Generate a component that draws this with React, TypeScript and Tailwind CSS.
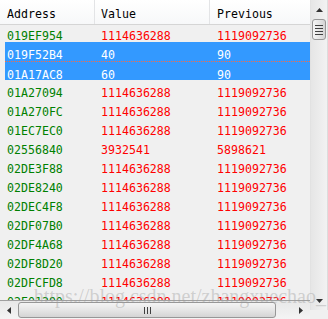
import React from "react";

type Row = { addr: string; value: string; prev: string };

const rows: Row[] = [
  { addr: "019EF954", value: "1114636288", prev: "1119092736" },
  { addr: "019F52B4", value: "40", prev: "90" },
  { addr: "01A17AC8", value: "60", prev: "90" },
  { addr: "01A27094", value: "1114636288", prev: "1119092736" },
  { addr: "01A270FC", value: "1114636288", prev: "1119092736" },
  { addr: "01EC7EC0", value: "1114636288", prev: "1119092736" },
  { addr: "02556840", value: "3932541", prev: "5898621" },
  { addr: "02DE3F88", value: "1114636288", prev: "1119092736" },
  { addr: "02DE8240", value: "1114636288", prev: "1119092736" },
  { addr: "02DEC4F8", value: "1114636288", prev: "1119092736" },
  { addr: "02DF07B0", value: "1114636288", prev: "1119092736" },
  { addr: "02DF4A68", value: "1114636288", prev: "1119092736" },
  { addr: "02DF8D20", value: "1114636288", prev: "1119092736" },
  { addr: "02DFCFD8", value: "1114636288", prev: "1119092736" },
  { addr: "02E01290", value: "1114636288", prev: "1119092736" },
];

const selected = [1, 2];
const focused = 2;

function Arrow({ dir }: { dir: "up" | "down" | "left" | "right" }) {
  const pts = {
    up: "0,4 7,4 3.5,0",
    down: "0,0 7,0 3.5,4",
    left: "4,0 4,7 0,3.5",
    right: "0,0 0,7 4,3.5",
  }[dir];
  const vertical = dir === "up" || dir === "down";
  return (
    <svg width={vertical ? 7 : 4} height={vertical ? 4 : 7} viewBox={vertical ? "0 0 7 4" : "0 0 4 7"}>
      <polygon points={pts} fill="#333" />
    </svg>
  );
}

export default function App() {
  return (
    <div className="w-[328px] h-[319px] flex overflow-hidden bg-[#f0f0f0] font-['DejaVu_Sans_Mono',monospace] text-[11.6px] relative">
      {/* list + horizontal scrollbar */}
      <div className="w-[310px] flex flex-col">
        <div className="h-[300px] flex flex-col overflow-hidden">
          <div className="relative z-10 h-[25px] shrink-0 flex bg-gradient-to-b from-white to-[#f7f8f9] border-b border-[#d5d5d5] text-black leading-[24px] pt-[2px]">
            <div className="w-[95px] pl-[7px] border-r border-[#e3e4e6] -mt-[2px] pt-[2px]">Address</div>
            <div className="w-[115px] pl-[6px] border-r border-[#e3e4e6] -mt-[2px] pt-[2px]">Value</div>
            <div className="flex-1 pl-[7px]">Previous</div>
          </div>
          <div className="-mt-[2px]">
            {rows.map((r, i) => {
              const sel = selected.includes(i);
              return (
                <div
                  key={r.addr}
                  className={
                    "ml-[5px] h-[19px] flex leading-[19px] pt-[4px] " +
                    (sel ? "bg-[#3399ff] text-white " : "") +
                    (i === focused ? "border-t border-dotted border-[#ff6a3a]" : "")
                  }
                >
                  <div className={"w-[94px] pl-[2px] " + (sel ? "" : "text-[#008000]")}>{r.addr}</div>
                  <div className={"w-[116px] pl-[2px] " + (sel ? "" : "text-[#ff0000]")}>{r.value}</div>
                  <div className={"flex-1 pl-[2px] " + (sel ? "" : "text-[#ff0000]")}>{r.prev}</div>
                </div>
              );
            })}
          </div>
        </div>
        {/* horizontal scrollbar */}
        <div className="h-[19px] flex items-stretch bg-gradient-to-b from-[#e8e8e8] to-[#f4f4f4] border-t border-[#a0a0a0]">
          <div className="w-[18px] flex items-center justify-center">
            <Arrow dir="left" />
          </div>
          <div className="w-[258px] my-[1px] rounded-[3px] border border-[#979797] bg-gradient-to-b from-[#f4f4f4] via-[#e6e6e6] to-[#d4d4d4] flex items-center justify-center gap-[2px]">
            <div className="w-[1px] h-[7px] bg-[#404040]" />
            <div className="w-[1px] h-[7px] bg-[#404040]" />
            <div className="w-[1px] h-[7px] bg-[#404040]" />
          </div>
          <div className="flex-1" />
          <div className="w-[18px] flex items-center justify-center">
            <Arrow dir="right" />
          </div>
        </div>
      </div>
      {/* vertical scrollbar */}
      <div className="w-[18px] flex flex-col">
        <div className="h-[310px] flex flex-col bg-gradient-to-r from-[#e6e6e6] to-[#f2f2f2] border-l border-[#e2e2e2] border-r border-r-[#dcdcdc]">
          <div className="h-[19px] flex items-center justify-center">
            <Arrow dir="up" />
          </div>
          <div className="h-[21px] mx-[1px] rounded-[3px] border border-[#979797] bg-gradient-to-r from-[#f4f4f4] via-[#e6e6e6] to-[#d4d4d4] flex flex-col items-center justify-center gap-[2px]">
            <div className="w-[8px] h-[1px] bg-[#404040]" />
            <div className="w-[8px] h-[1px] bg-[#404040]" />
            <div className="w-[8px] h-[1px] bg-[#404040]" />
            <div className="w-[8px] h-[1px] bg-[#404040]" />
          </div>
          <div className="flex-1" />
          <div className="h-[18px] flex items-center justify-center">
            <Arrow dir="down" />
          </div>
        </div>
        <div className="flex-1 bg-[#f0f0f0]" />
      </div>
      {/* watermark */}
      <div className="absolute right-[2px] top-[281px] whitespace-nowrap font-['Liberation_Serif',serif] text-[20px] text-[#9a9a9a]/40 pointer-events-none">
        https://blog.csdn.net/zhangxuechao_
      </div>
    </div>
  );
}
